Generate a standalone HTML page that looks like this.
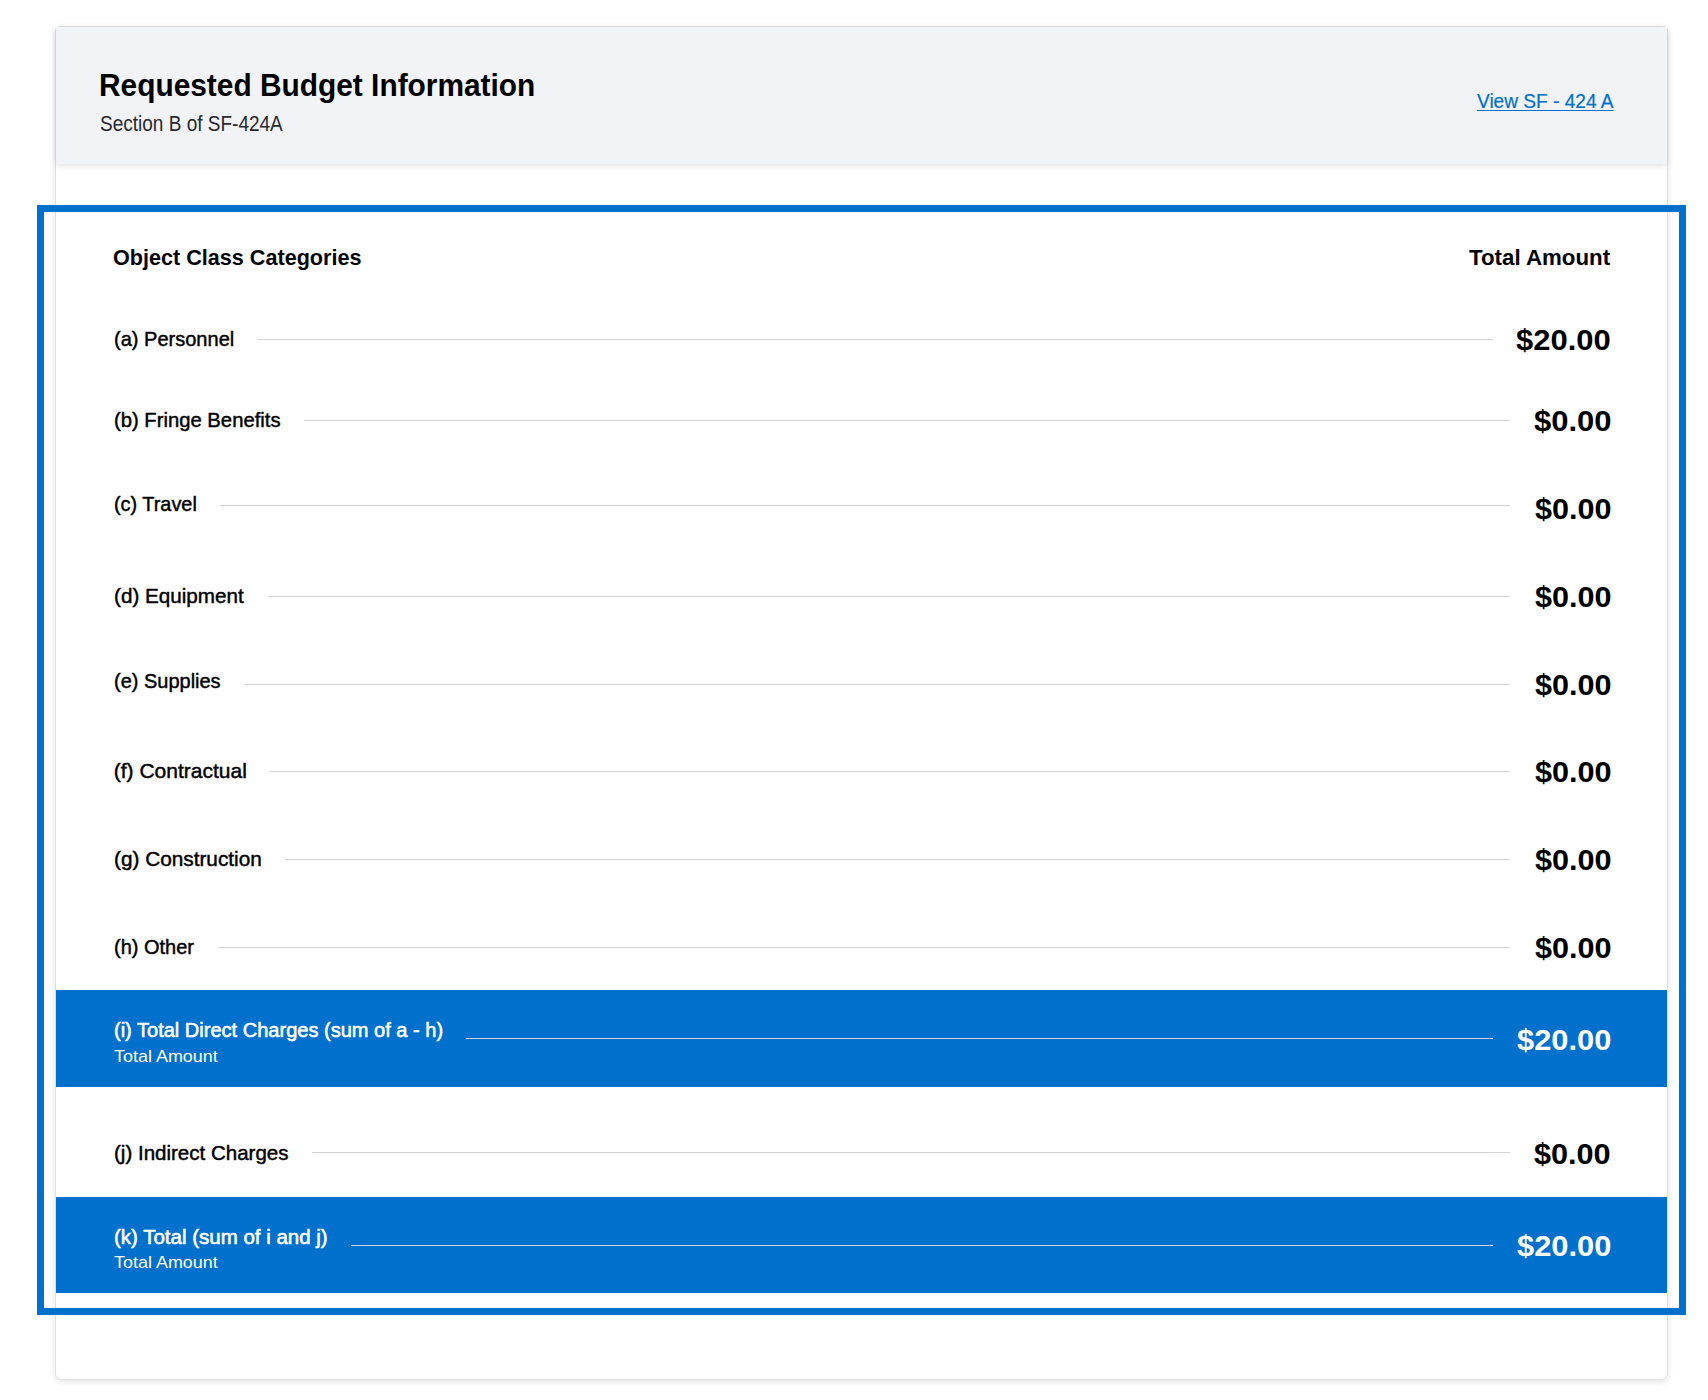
<!DOCTYPE html>
<html><head><meta charset="utf-8"><style>
html,body{margin:0;padding:0;background:#fff;width:1708px;height:1400px;overflow:hidden;position:relative}
body{font-family:"Liberation Sans",sans-serif}
.card{position:absolute;left:55px;top:26px;width:1613px;height:1354px;box-sizing:border-box;border:1px solid #dfe0e4;border-radius:5px 5px 7px 7px;background:#fff;box-shadow:0 2px 6px rgba(0,0,0,0.11)}
.hdr{position:absolute;left:56px;top:27px;width:1611px;height:137px;background:#f2f3f6;border-radius:1px 1px 0 0;box-shadow:0 2px 6px rgba(0,0,0,0.12)}
.outline{position:absolute;left:37px;top:205px;width:1649px;height:1110px;box-sizing:border-box;border:7px solid #0070cd}
.brow{position:absolute;left:56px;width:1611px;background:#0070cd}
.ln{position:absolute;height:1px}
.t{position:absolute;white-space:nowrap;line-height:1;transform-origin:0 0}
</style></head><body>
<div class="card"></div>
<div class="hdr"></div>
<div class="brow" style="top:990px;height:97px"></div>
<div class="brow" style="top:1197px;height:96px"></div>
<div class="ln" style="top:339px;left:257px;width:1236px;background:#d0d4da"></div><div class="ln" style="top:420px;left:304px;width:1206px;background:#d0d4da"></div><div class="ln" style="top:505px;left:220px;width:1290px;background:#d0d4da"></div><div class="ln" style="top:596px;left:268px;width:1242px;background:#d0d4da"></div><div class="ln" style="top:684px;left:244px;width:1266px;background:#d0d4da"></div><div class="ln" style="top:771px;left:270px;width:1240px;background:#d0d4da"></div><div class="ln" style="top:859px;left:285px;width:1225px;background:#d0d4da"></div><div class="ln" style="top:947px;left:218px;width:1292px;background:#d0d4da"></div><div class="ln" style="top:1038px;left:466px;width:1027px;background:#d0d4da"></div><div class="ln" style="top:1152px;left:312px;width:1198px;background:#d0d4da"></div><div class="ln" style="top:1245px;left:351px;width:1142px;background:#d0d4da"></div>
<div id="title" class="t" style="left:98.74px;top:69.40px;font-size:32px;font-weight:700;color:#000;transform-origin:0 27px;transform:scale(0.9332,1.0000)">Requested Budget Information</div><div id="sub" class="t" style="left:99.69px;top:113.40px;font-size:22px;font-weight:400;color:#262a30;transform-origin:0 18px;transform:scale(0.8640,1.0000)">Section B of SF-424A</div><div id="link" class="t" style="left:1476.82px;top:90.70px;font-size:20px;font-weight:400;color:#0070cd;-webkit-text-stroke:0.2px #0070cd;text-decoration:underline;text-decoration-thickness:1px;text-underline-offset:1.5px;transform-origin:0 17px;transform:scale(0.9542,1.0000)">View SF - 424 A</div><div id="occ" class="t" style="left:112.81px;top:246.80px;font-size:22px;font-weight:700;color:#000;transform-origin:0 18px;transform:scale(0.9817,1.0000)">Object Class Categories</div><div id="ta" class="t" style="left:1469.00px;top:247.00px;font-size:22px;font-weight:700;color:#000;transform-origin:0 18px;transform:scale(1.0129,1.0000)">Total Amount</div><div id="lbl_a" class="t" style="left:113.82px;top:327.70px;font-size:21px;font-weight:400;color:#000;-webkit-text-stroke:0.45px #000;transform-origin:0 18px;transform:scale(0.9536,1.0000)">(a) Personnel</div><div id="lbl_b" class="t" style="left:113.81px;top:409.00px;font-size:21px;font-weight:400;color:#000;-webkit-text-stroke:0.45px #000;transform-origin:0 18px;transform:scale(0.9640,1.0000)">(b) Fringe Benefits</div><div id="lbl_c" class="t" style="left:113.82px;top:492.80px;font-size:21px;font-weight:400;color:#000;-webkit-text-stroke:0.45px #000;transform-origin:0 18px;transform:scale(0.9465,1.0000)">(c) Travel</div><div id="lbl_d" class="t" style="left:113.80px;top:585.10px;font-size:21px;font-weight:400;color:#000;-webkit-text-stroke:0.45px #000;transform-origin:0 18px;transform:scale(0.9841,1.0000)">(d) Equipment</div><div id="lbl_e" class="t" style="left:113.82px;top:669.70px;font-size:21px;font-weight:400;color:#000;-webkit-text-stroke:0.45px #000;transform-origin:0 18px;transform:scale(0.9514,1.0000)">(e) Supplies</div><div id="lbl_f" class="t" style="left:113.79px;top:760.00px;font-size:21px;font-weight:400;color:#000;-webkit-text-stroke:0.45px #000;transform-origin:0 18px;transform:scale(1.0000,1.0000)">(f) Contractual</div><div id="lbl_g" class="t" style="left:113.80px;top:848.10px;font-size:21px;font-weight:400;color:#000;-webkit-text-stroke:0.45px #000;transform-origin:0 18px;transform:scale(0.9892,1.0000)">(g) Construction</div><div id="lbl_h" class="t" style="left:113.82px;top:936.10px;font-size:21px;font-weight:400;color:#000;-webkit-text-stroke:0.45px #000;transform-origin:0 18px;transform:scale(0.9524,1.0000)">(h) Other</div><div id="lbl_i" class="t" style="left:113.82px;top:1018.60px;font-size:21px;font-weight:400;color:#fff;-webkit-text-stroke:0.6px #fff;transform-origin:0 18px;transform:scale(0.9538,1.0000)">(i) Total Direct Charges (sum of a - h)</div><div id="lbl_j" class="t" style="left:113.80px;top:1142.00px;font-size:21px;font-weight:400;color:#000;-webkit-text-stroke:0.45px #000;transform-origin:0 18px;transform:scale(0.9775,1.0000)">(j) Indirect Charges</div><div id="lbl_k" class="t" style="left:113.81px;top:1225.80px;font-size:21px;font-weight:400;color:#fff;-webkit-text-stroke:0.6px #fff;transform-origin:0 18px;transform:scale(0.9757,1.0000)">(k) Total (sum of i and j)</div><div id="ta_i" class="t" style="left:113.59px;top:1048.00px;font-size:17px;font-weight:400;color:#fff;transform-origin:0 14px;transform:scale(1.0561,1.0000)">Total Amount</div><div id="ta_k" class="t" style="left:113.59px;top:1254.00px;font-size:17px;font-weight:400;color:#fff;transform-origin:0 14px;transform:scale(1.0561,1.0000)">Total Amount</div><div id="amt_a" class="t" style="left:1515.79px;top:323.90px;font-size:31px;font-weight:700;color:#000;transform-origin:0 26px;transform:scale(0.9989,0.9500)">$20.00</div><div id="amt_b" class="t" style="left:1533.79px;top:404.50px;font-size:31px;font-weight:700;color:#000;transform-origin:0 26px;transform:scale(0.9987,0.9500)">$0.00</div><div id="amt_c" class="t" style="left:1534.60px;top:492.90px;font-size:31px;font-weight:700;color:#000;transform-origin:0 26px;transform:scale(0.9868,0.9500)">$0.00</div><div id="amt_d" class="t" style="left:1534.60px;top:581.10px;font-size:31px;font-weight:700;color:#000;transform-origin:0 26px;transform:scale(0.9868,0.9500)">$0.00</div><div id="amt_e" class="t" style="left:1534.60px;top:669.00px;font-size:31px;font-weight:700;color:#000;transform-origin:0 26px;transform:scale(0.9868,0.9500)">$0.00</div><div id="amt_f" class="t" style="left:1534.60px;top:756.00px;font-size:31px;font-weight:700;color:#000;transform-origin:0 26px;transform:scale(0.9868,0.9500)">$0.00</div><div id="amt_g" class="t" style="left:1534.60px;top:843.90px;font-size:31px;font-weight:700;color:#000;transform-origin:0 26px;transform:scale(0.9868,0.9500)">$0.00</div><div id="amt_h" class="t" style="left:1534.60px;top:931.60px;font-size:31px;font-weight:700;color:#000;transform-origin:0 26px;transform:scale(0.9868,0.9500)">$0.00</div><div id="amt_i" class="t" style="left:1516.60px;top:1024.30px;font-size:31px;font-weight:700;color:#fff;transform-origin:0 26px;transform:scale(0.9946,0.9500)">$20.00</div><div id="amt_j" class="t" style="left:1534.39px;top:1138.10px;font-size:31px;font-weight:700;color:#000;transform-origin:0 26px;transform:scale(0.9882,0.9500)">$0.00</div><div id="amt_k" class="t" style="left:1516.60px;top:1230.00px;font-size:31px;font-weight:700;color:#fff;transform-origin:0 26px;transform:scale(0.9946,0.9500)">$20.00</div>
<div class="outline"></div>
</body></html>
